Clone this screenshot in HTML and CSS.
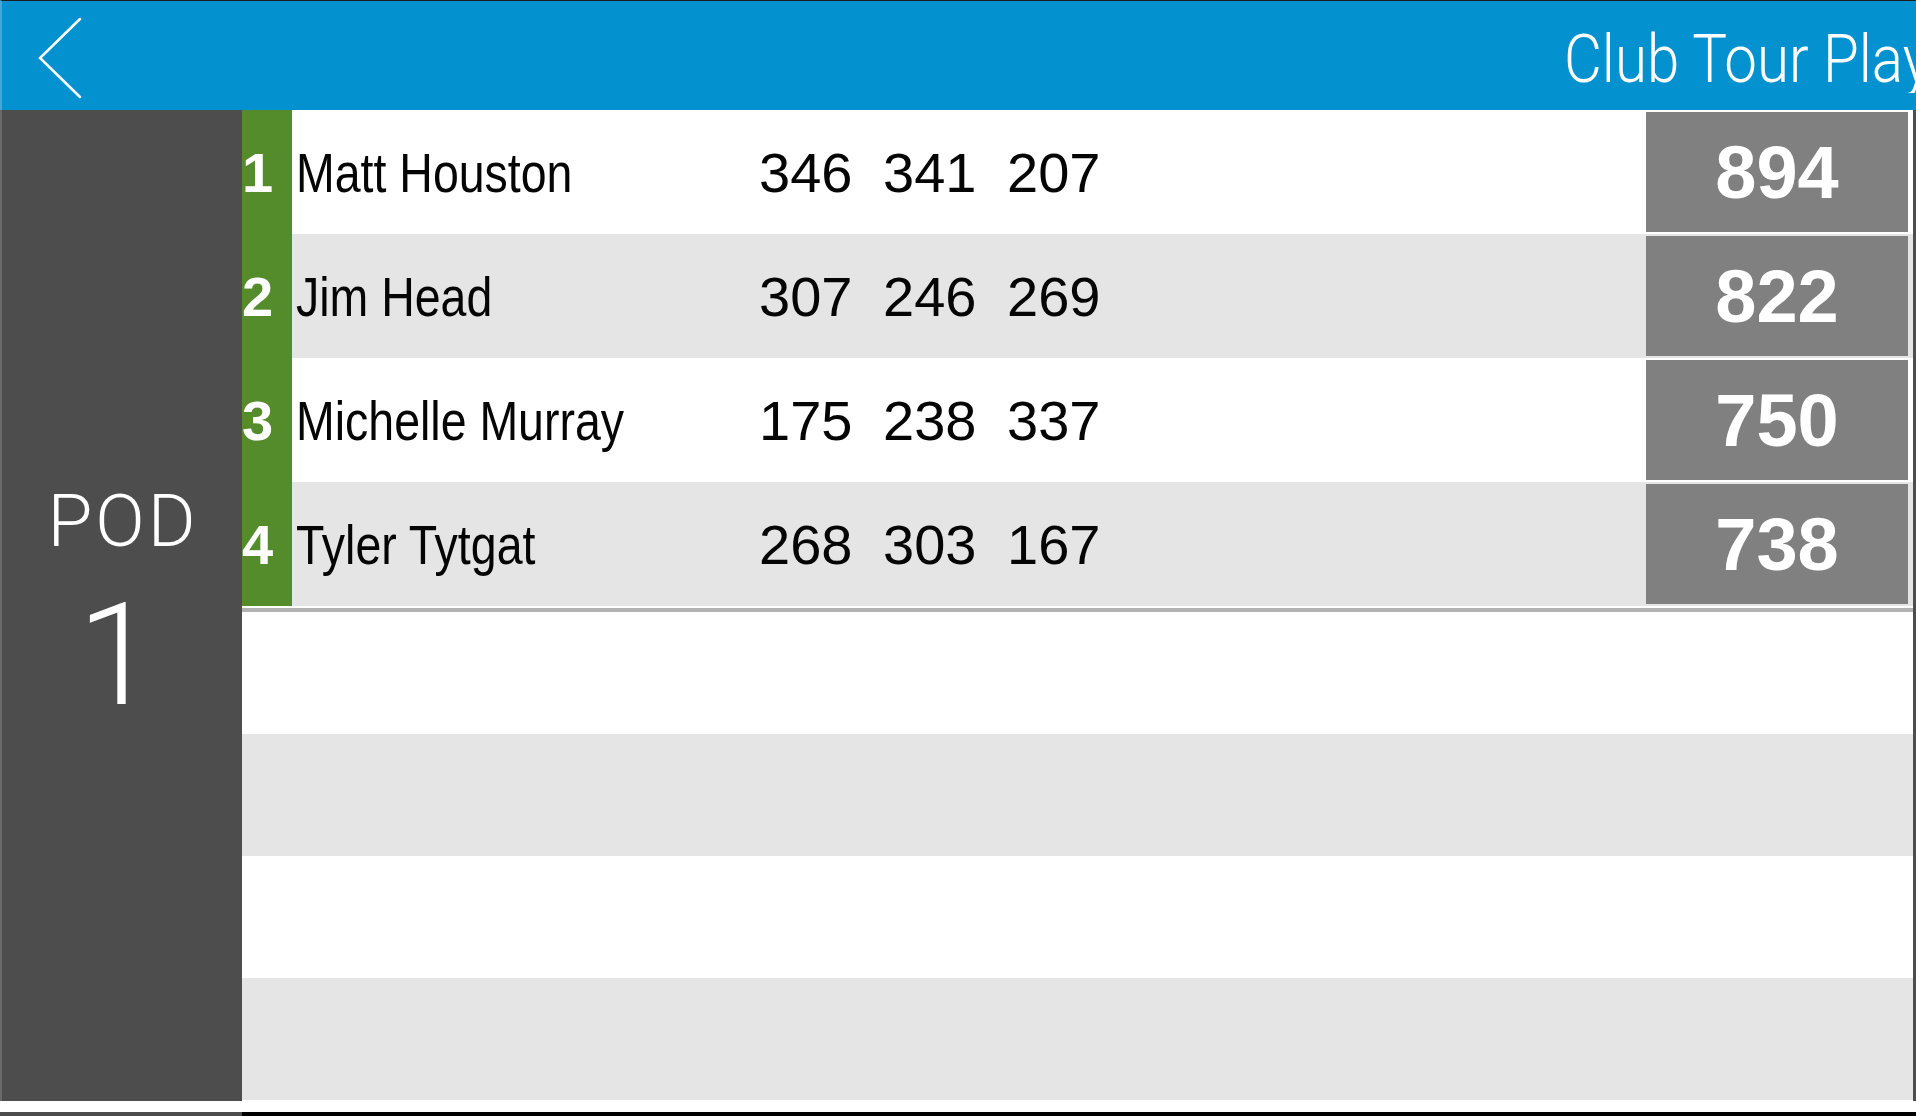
FILE: index.html
```html
<!DOCTYPE html>
<html lang="en">
<head>
    <meta charset="UTF-8">
    <title>Club Tour Players</title>
    <link rel="stylesheet" href="styles.css">
</head>
<body>
    <div id="header">
        <svg class="back" width="100" height="109" viewBox="0 0 100 109">
            <polyline points="80,18 40,57 80,96" fill="none" stroke="white" stroke-width="2.5" stroke-linecap="round" stroke-linejoin="miter"/>
        </svg>
        <div class="title"><span>Club Tour Players</span></div>
    </div>

    <div id="main">
        <div class="pod">
            <div class="pod-label">POD</div>
            <div class="pod-num">1</div>
        </div>

        <div class="board">
            <div class="player">
                <div class="rank">1</div>
                <div class="name"><span>Matt Houston</span></div>
                <div class="score">346</div>
                <div class="score">341</div>
                <div class="score">207</div>
                <div></div>
                <div class="total">894</div>
            </div>
            <div class="player">
                <div class="rank">2</div>
                <div class="name"><span>Jim Head</span></div>
                <div class="score">307</div>
                <div class="score">246</div>
                <div class="score">269</div>
                <div></div>
                <div class="total">822</div>
            </div>
            <div class="player">
                <div class="rank">3</div>
                <div class="name"><span>Michelle Murray</span></div>
                <div class="score">175</div>
                <div class="score">238</div>
                <div class="score">337</div>
                <div></div>
                <div class="total">750</div>
            </div>
            <div class="player">
                <div class="rank">4</div>
                <div class="name"><span>Tyler Tytgat</span></div>
                <div class="score">268</div>
                <div class="score">303</div>
                <div class="score">167</div>
                <div></div>
                <div class="total">738</div>
            </div>

            <div class="divider"></div>

            <div class="empty"></div>
            <div class="empty"></div>
            <div class="empty"></div>
            <div class="empty"></div>
        </div>
    </div>

    <div class="gap"></div>
    <div class="next">
        <div class="next-side"></div>
        <div class="next-main"></div>
    </div>
</body>
</html>
```

FILE: styles.css
```css
body {
    font-family: "Liberation Sans", Arial, sans-serif;
    margin: 0;
    padding: 0;
    width: 1916px;
    height: 1116px;
    overflow: hidden;
    background-color: white;
}
#header {
    display: flex;
    align-items: flex-start;
    height: 109px;
    border-top: 1px solid #1c1c1c;
    border-left: 2px solid #45a6da;
    background-color: #0392cf;
    color: white;
    overflow: hidden;
}
#header .back {
    flex: none;
    margin-left: -2px;
}
#header .title {
    flex: 1;
    padding: 25px 0 0 1464px;
    font-family: Roboto, "Liberation Sans", sans-serif;
    font-weight: 300;
    font-size: 67px;
    line-height: 1;
    white-space: nowrap;
    overflow: hidden;
}
#header .title span {
    display: inline-block;
    transform: scaleX(0.87);
    transform-origin: left center;
}
#main {
    display: flex;
    height: 991px;
}
.pod {
    flex: none;
    box-sizing: border-box;
    width: 242px;
    border-left: 2px solid #6a6a6a;
    background-color: #4d4d4d;
    color: white;
    display: flex;
    flex-direction: column;
    align-items: center;
    justify-content: center;
    font-family: Roboto, "Liberation Sans", sans-serif;
    font-weight: 300;
    padding-bottom: 6px;
}
.pod-label {
    font-size: 73px;
    line-height: 1;
    margin-top: 6px;
    letter-spacing: 3px;
    padding-left: 2px;
}
.pod-num {
    font-size: 142px;
    line-height: 1;
    margin-top: 27px;
    padding-right: 10px;
}
.board {
    flex: 1;
    border-right: 3px solid #4d4d4d;
}
.player {
    display: grid;
    grid-template-columns: 50px 467px 124px 124px 124px 1fr 262px;
    height: 124px;
    padding-right: 5px;
    align-items: center;
}
.player:nth-child(even) {
    background-color: #e5e5e5;
}
.rank {
    align-self: stretch;
    display: flex;
    align-items: center;
    background-color: #548c2b;
    color: white;
    font-weight: bold;
    font-size: 56px;
}
.name {
    padding-left: 4px;
    font-size: 56px;
    color: #050505;
    white-space: nowrap;
}
.name span {
    display: inline-block;
    transform: scaleX(0.83);
    transform-origin: left center;
}
.score {
    font-size: 56px;
    color: #050505;
}
.total {
    align-self: stretch;
    margin: 2px 0;
    display: flex;
    align-items: center;
    justify-content: center;
    background-color: #808080;
    color: white;
    font-weight: bold;
    font-size: 74px;
}
.divider {
    height: 4px;
    margin-top: 2px;
    background-color: #b3b3b3;
}
.empty {
    height: 122px;
}
.empty:nth-child(odd) {
    background-color: #e5e5e5;
}
.gap {
    height: 11px;
}
.next {
    display: flex;
    height: 4px;
}
.next-side {
    width: 242px;
    background-color: #4d4d4d;
}
.next-main {
    flex: 1;
    background-color: black;
}
```
